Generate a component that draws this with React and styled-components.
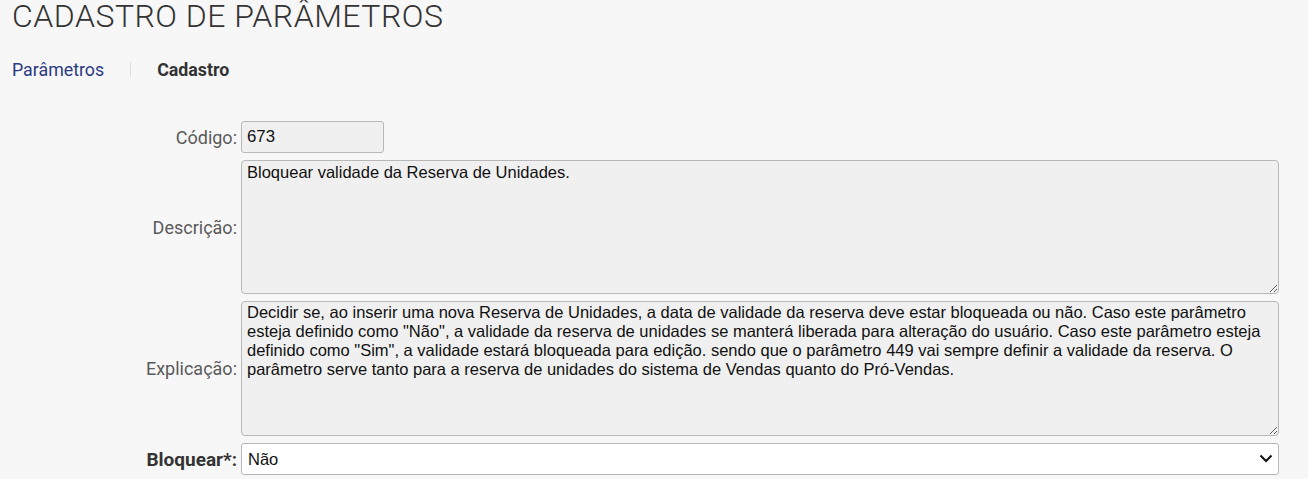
import React from "react";
import styled, { createGlobalStyle } from "styled-components";

const Global = createGlobalStyle`
  html, body { margin: 0; padding: 0; background: #f7f7f7; }
  body { font-family: Roboto, "Liberation Sans", Arial, sans-serif; color: #333; }
  * { box-sizing: border-box; }
`;

const Page = styled.div`
  padding: 0;
`;

const Title = styled.h1`
  margin: 0;
  padding: 0 0 0 12px;
  font-family: Roboto, sans-serif;
  font-weight: 300;
  font-size: 32px;
  letter-spacing: 0.5px;
  line-height: 32px;
  color: #333;
`;

const Breadcrumb = styled.nav`
  display: flex;
  align-items: center;
  padding-left: 12px;
  margin-top: 26px;
  height: 22px;
  font-size: 17.8px;
`;

const Crumb = styled.span`
  color: ${(p) => (p.$current ? "#333" : "#2b3a82")};
  font-weight: ${(p) => (p.$current ? 700 : 400)};
`;

const Sep = styled.span`
  width: 1px;
  height: 15px;
  background: #e0e0e0;
  margin: 0 26px;
`;

const Form = styled.div`
  display: grid;
  grid-template-columns: 237px 1038px;
  column-gap: 4px;
  row-gap: 7px;
  margin-top: 41px;
`;

const Label = styled.label`
  display: flex;
  align-items: center;
  justify-content: flex-end;
  font-size: ${(p) => (p.$required ? 19 : 18)}px;
  color: ${(p) => (p.$required ? "#333" : "#5a5a5a")};
  font-weight: ${(p) => (p.$required ? 700 : 400)};
`;

const Input = styled.input`
  width: 143px;
  height: 32px;
  border: 1px solid #b8b8b8;
  border-radius: 3px;
  background: #f0f0f0;
  padding: 0 5px;
  font-family: "Liberation Sans", Arial, sans-serif;
  font-size: 16.8px;
  color: #111;
  outline: none;
  display: block;
`;

const Area = styled.textarea`
  width: 1038px;
  height: ${(p) => p.$h}px;
  border: 1px solid #b8b8b8;
  border-radius: 4px;
  background: #f0f0f0;
  padding: ${(p) => p.$pt}px 5px 0;
  font-family: "Liberation Sans", Arial, sans-serif;
  font-size: 16.5px;
  line-height: 19px;
  color: #111;
  outline: none;
  resize: both;
  display: block;
`;

const SelectWrap = styled.div`
  position: relative;
  width: 1038px;
  height: 32px;
`;

const Select = styled.select`
  appearance: none;
  width: 100%;
  height: 32px;
  border: 1px solid #b8b8b8;
  border-radius: 3px;
  background: #fff;
  padding: 0 6px;
  font-family: "Liberation Sans", Arial, sans-serif;
  font-size: 16.5px;
  color: #111;
  outline: none;
`;

const Chevron = styled.svg`
  position: absolute;
  right: 6px;
  top: 11px;
  pointer-events: none;
`;

const descricao = "Bloquear validade da Reserva de Unidades.";
const explicacao =
  'Decidir se, ao inserir uma nova Reserva de Unidades, a data de validade da reserva deve estar bloqueada ou não. Caso este parâmetro esteja definido como "Não", a validade da reserva de unidades se manterá liberada para alteração do usuário. Caso este parâmetro esteja definido como "Sim", a validade estará bloqueada para edição. sendo que o parâmetro 449 vai sempre definir a validade da reserva. O parâmetro serve tanto para a reserva de unidades do sistema de Vendas quanto do Pró-Vendas.';

export default function App() {
  return (
    <Page>
      <Global />
      <Title>CADASTRO DE PARÂMETROS</Title>
      <Breadcrumb>
        <Crumb>Parâmetros</Crumb>
        <Sep />
        <Crumb $current>Cadastro</Crumb>
      </Breadcrumb>
      <Form>
        <Label>Código:</Label>
        <div>
          <Input readOnly defaultValue="673" />
        </div>
        <Label>Descrição:</Label>
        <Area $h={134} $pt={2} readOnly defaultValue={descricao} />
        <Label>Explicação:</Label>
        <Area $h={135} $pt={1} readOnly defaultValue={explicacao} />
        <Label $required>Bloquear*:</Label>
        <SelectWrap>
          <Select defaultValue="N">
            <option value="N">Não</option>
            <option value="S">Sim</option>
          </Select>
          <Chevron width="14" height="9" viewBox="0 0 14 9">
            <path d="M1.5 1.5 L7 7 L12.5 1.5" fill="none" stroke="#111" strokeWidth="2" />
          </Chevron>
        </SelectWrap>
      </Form>
    </Page>
  );
}
